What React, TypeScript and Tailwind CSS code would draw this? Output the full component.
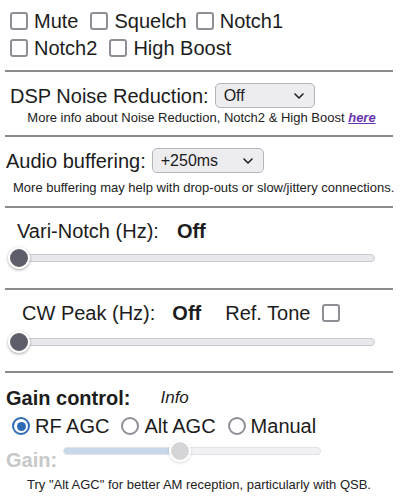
import React from 'react';

const Box = ({ className = '' }: { className?: string }) => (
  <span className={`inline-block w-[18px] h-[18px] rounded-[3px] border-2 border-[#8e8e96] bg-white shrink-0 ${className}`} />
);

const Check = ({ label, gap = 'mr-[12px]' }: { label: string; gap?: string }) => (
  <label className={`flex items-center ${gap}`}>
    <Box className="mr-[6px]" />
    <span>{label}</span>
  </label>
);

const Radio = ({ label, checked = false }: { label: string; checked?: boolean }) => (
  <label className="flex items-center mr-[12px]">
    {checked ? (
      <span className="w-[18px] h-[18px] rounded-full border-2 border-[#2f6bb5] bg-white flex items-center justify-center mr-[5px]">
        <span className="w-[9px] h-[9px] rounded-full bg-[#2f6bb5]" />
      </span>
    ) : (
      <span className="w-[18px] h-[18px] rounded-full border-2 border-[#8e8e96] bg-white mr-[5px]" />
    )}
    <span>{label}</span>
  </label>
);

const Select = ({ value, width }: { value: string; width: string }) => (
  <div className={`${width} h-[25px] rounded-[5px] border border-[#b4b4bc] bg-[#ededf0] flex items-center justify-between pl-[8px] pr-[10px] text-[16px]`}>
    <span>{value}</span>
    <svg width="10" height="6" viewBox="0 0 10 6" fill="none">
      <path d="M1 1l4 4 4-4" stroke="#222" strokeWidth="1.6" strokeLinecap="round" strokeLinejoin="round" />
    </svg>
  </div>
);

const Sep = () => <div className="mx-[5px] w-[388px] h-[2px] bg-[#8a8a8a]" />;

const Slider = () => (
  <div className="relative h-[22px] ml-[10px] w-[365px] flex items-center">
    <div className="w-full h-[8px] rounded-full bg-[#e9e9ed] border border-[#c9c9cf]" />
    <span className="absolute left-[-2px] top-0 w-[22px] h-[22px] rounded-full bg-[#5e5e6a] border-2 border-white shadow-[0_1px_3px_rgba(0,0,0,0.35)]" />
  </div>
);

export default function App() {
  return (
    <div className="w-[400px] h-[499px] bg-white text-[20px] text-[#1c1c1c] overflow-hidden" style={{ fontFamily: '"Liberation Sans", Arial, sans-serif' }}>
      {/* Checkboxes */}
      <div className="pl-[10px] pt-[7px]">
        <div className="flex h-[27px] items-center">
          <Check label="Mute" />
          <Check label="Squelch" gap="mr-[9px]" />
          <Check label="Notch1" />
        </div>
        <div className="flex h-[27px] items-center">
          <Check label="Notch2" />
          <Check label="High Boost" />
        </div>
      </div>
      <div className="mt-[9px]"><Sep /></div>

      {/* DSP */}
      <div className="flex items-center h-[25px] mt-[11px] pl-[10px]">
        <span className="mr-[6px]">DSP Noise Reduction:</span>
        <Select value="Off" width="w-[100px]" />
      </div>
      <div className="text-[13px] h-[15px] leading-[15px] mt-[2px] text-center text-[#222] pl-[3px] whitespace-nowrap">
        More info about Noise Reduction, Notch2 &amp; High Boost{' '}
        <a className="font-bold italic underline text-[#6a35b0]">here</a>
      </div>
      <div className="mt-[10px]"><Sep /></div>

      {/* Audio buffering */}
      <div className="flex items-center h-[25px] mt-[11px] pl-[6px]">
        <span className="mr-[6px]">Audio buffering:</span>
        <Select value="+250ms" width="w-[112px]" />
      </div>
      <div className="text-[13px] h-[15px] leading-[15px] mt-[7px] pl-[13px] text-[#222] whitespace-nowrap">
        More buffering may help with drop-outs or slow/jittery connections.
      </div>
      <div className="mt-[11px]"><Sep /></div>

      {/* Vari-Notch */}
      <div className="flex items-center h-[22px] mt-[12px] pl-[17px]">
        <span className="mr-[18px]">Vari-Notch (Hz):</span>
        <span className="font-bold">Off</span>
      </div>
      <div className="mt-[5px]"><Slider /></div>
      <div className="mt-[19px]"><Sep /></div>

      {/* CW Peak */}
      <div className="flex items-center h-[22px] mt-[12px] pl-[22px]">
        <span className="mr-[17px]">CW Peak (Hz):</span>
        <span className="font-bold mr-[24px]">Off</span>
        <span className="mr-[12px]">Ref. Tone</span>
        <Box />
      </div>
      <div className="mt-[7px]"><Slider /></div>
      <div className="mt-[18px]"><Sep /></div>

      {/* Gain control */}
      <div className="flex items-center h-[22px] mt-[14px] pl-[6px]">
        <span className="font-bold mr-[30px]">Gain control:</span>
        <span className="italic text-[17px]">Info</span>
      </div>
      <div className="flex items-center h-[22px] mt-[6px] pl-[12px]">
        <Radio label="RF AGC" checked />
        <Radio label="Alt AGC" />
        <Radio label="Manual" />
      </div>
      <div className="flex items-end h-[30px] mt-[4px] pl-[6px]">
        <span className="font-bold text-[#c8c8c8] mr-[8px] leading-[22px]">Gain:</span>
        <div className="relative h-[22px] w-[258px] flex items-center self-start mt-[-1px] ml-[-2px]">
          <div className="w-full h-[8px] rounded-full bg-[#f1f1f3] border border-[#e2e2e6] overflow-hidden">
            <div className="h-full w-[117px] bg-[#c9d7ea]" />
          </div>
          <span className="absolute left-[106px] top-0 w-[22px] h-[22px] rounded-full bg-[#d5d5d8] border-2 border-white shadow-[0_1px_3px_rgba(0,0,0,0.15)]" />
        </div>
      </div>
      <div className="text-[13px] h-[15px] leading-[15px] mt-[6px] pl-[27px] text-[#222] whitespace-nowrap">
        Try "Alt AGC" for better AM reception, particularly with QSB.
      </div>
    </div>
  );
}
